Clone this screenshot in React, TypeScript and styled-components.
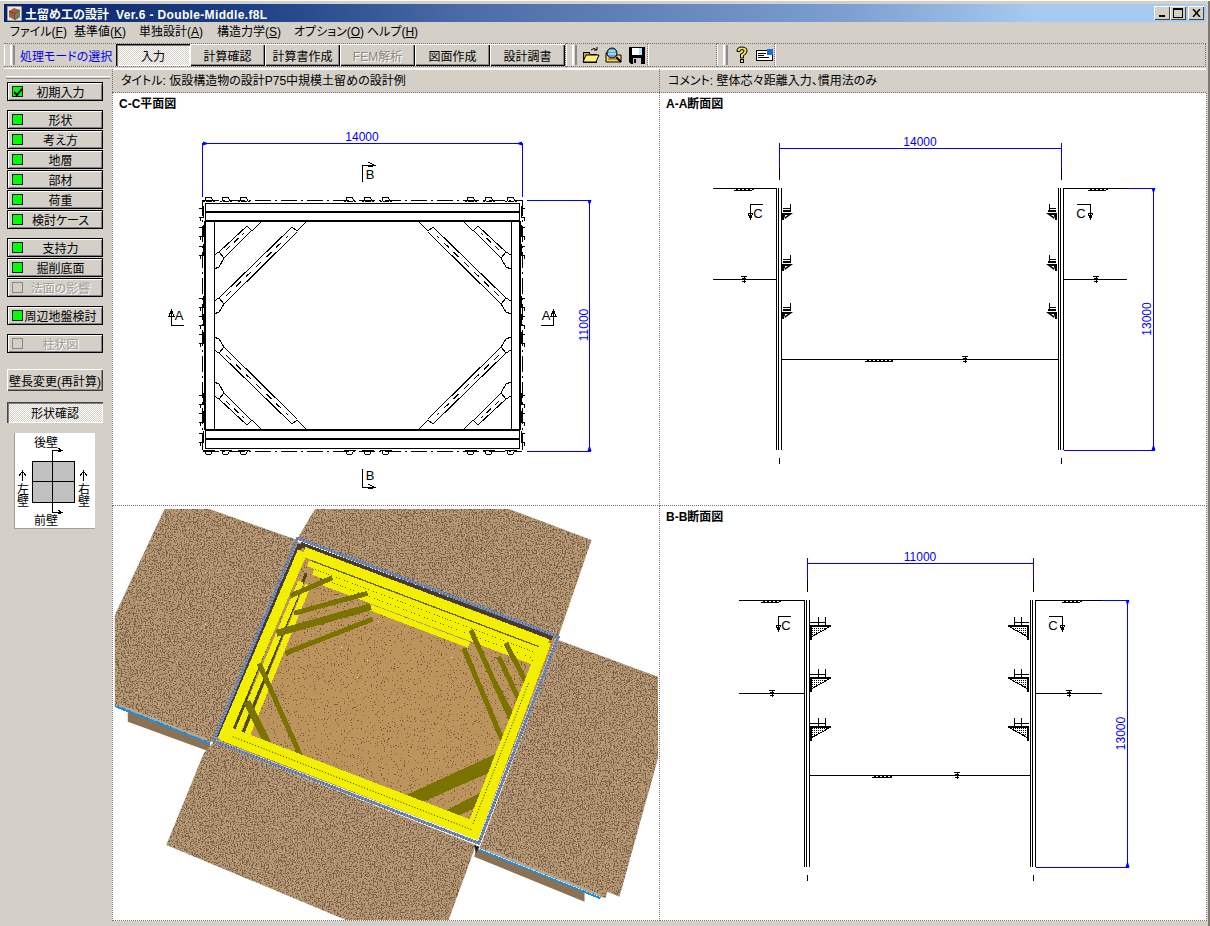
import { ReactElement } from 'react';
import styled, { createGlobalStyle, css } from 'styled-components';

const FACE = '#d4d0c8';
const UI_FONT = '"Liberation Sans", "Noto Sans CJK JP", sans-serif';
const CHECKER = `repeating-conic-gradient(#fff 0 25%, ${FACE} 0 50%) 0 0 / 2px 2px`;

const GlobalStyle = createGlobalStyle`
    html, body {
        margin: 0;
        padding: 0;
        background: ${FACE};
    }
    * {
        box-sizing: border-box;
    }
`;

const Window = styled.div`
    width: 1210px;
    height: 926px;
    padding: 4px 4px 5px;
    background: ${FACE};
    box-shadow: inset 0 1px 0 #fff, inset -2px 0 0 #7c7870;
    font-family: ${UI_FONT};
    font-size: 12px;
    font-feature-settings: 'palt';
    color: #000;
    display: flex;
    flex-direction: column;
    overflow: hidden;
`;

const TitleBar = styled.div`
    height: 18px;
    flex: none;
    display: flex;
    align-items: center;
    padding: 0 3px;
    gap: 3px;
    background: linear-gradient(90deg, #0a246a 0%, #1d3f85 20%, #4a6ba6 38%, #7c9fd0 70%, #a6caf0 86%);
`;

const TitleText = styled.div`
    flex: 1;
    color: #fff;
    font-weight: 700;
    font-size: 12px;
    font-feature-settings: normal;
    white-space: pre;

    span {
        margin-left: 7px;
        letter-spacing: 0.35px;
    }
`;

const WinButton = styled.div<{ $gap?: boolean }>`
    width: 16px;
    height: 14px;
    margin-left: ${p => (p.$gap ? 2 : 0)}px;
    background: ${FACE};
    box-shadow: inset 1px 1px 0 #fff, inset -1px -1px 0 #404040;
    display: flex;
    align-items: center;
    justify-content: center;
`;

const WinButtons = styled.div`
    display: flex;
    margin-right: -1px;
`;

const MenuBar = styled.div`
    height: 20px;
    flex: none;
    display: flex;
    align-items: center;
    padding-left: 6px;
`;

const MenuItem = styled.div<{ $w: number }>`
    width: ${p => p.$w}px;
    font-size: 12px;
    line-height: 16px;
    white-space: nowrap;

    u {
        text-decoration: underline;
    }
`;

const ToolRow = styled.div`
    height: 27px;
    flex: none;
    display: flex;
    align-items: stretch;
    padding: 1px 0;
    border-bottom: 1px solid #fff;
`;

const Band = styled.div<{ $w: number }>`
    width: ${p => p.$w}px;
    flex: none;
    display: flex;
    align-items: center;
    border-top: 1px dotted #77736c;
    border-bottom: 1px dotted #77736c;
    border-right: 1px dotted #77736c;
    box-shadow: inset 1px 0 0 #fff;
`;

const Grip = styled.div<{ $r?: number }>`
    width: 5px;
    height: 20px;
    margin: 0 ${p => p.$r ?? 5}px 0 6px;
    border-left: 2px solid #fff;
    border-right: 2px solid #8b8a92;
    flex: none;
`;

const ModeLabel = styled.div`
    width: 96px;
    color: #0000ee;
    font-size: 12px;
    white-space: nowrap;
`;

const ModeButton = styled.div<{ $on?: boolean; $off?: boolean; $w?: number }>`
    width: ${p => p.$w ?? 74}px;
    height: 22px;
    flex: none;
    display: flex;
    align-items: center;
    justify-content: center;
    font-size: 12px;
    background: ${FACE};
    box-shadow: inset 1px 1px 0 #fff, inset -1px -1px 0 #000, inset -2px -2px 0 #8a8a8a;
    ${p =>
        p.$on &&
        css`
            background: ${CHECKER};
            box-shadow: inset 1px 1px 0 #000, inset 2px 2px 0 #808080, inset -1px -1px 0 #fff;
        `}
    ${p =>
        p.$off &&
        css`
            color: #8a8780;
            text-shadow: 1px 1px 0 #fff;
        `}
`;

const IconSlot = styled.div`
    width: 23px;
    height: 20px;
    display: flex;
    align-items: center;
    justify-content: center;
    flex: none;
`;

const Body = styled.div`
    flex: 1;
    display: flex;
    min-height: 0;
`;

const SidePanel = styled.div`
    width: 108px;
    flex: none;
    padding: 7px 0 0 3px;
`;

const SideGrip = styled.div`
    height: 3px;
    margin: 0 2px 3px -1px;
    border-top: 1px solid #fff;
    border-bottom: 1px solid #8b8a92;
`;

const SideGroup = styled.div<{ $top: number }>`
    margin-top: ${p => p.$top}px;
    display: flex;
    flex-direction: column;
    gap: 1px;
`;

const SideButton = styled.div<{ $off?: boolean }>`
    width: 96px;
    height: 19px;
    display: flex;
    align-items: center;
    padding: 0 4px;
    background: ${FACE};
    border: 1px solid #000;
    box-shadow: inset 1px 1px 0 #fff, inset -1px -1px 0 #7d7d88;
    font-size: 12px;
    ${p =>
        p.$off &&
        css`
            color: #a09c94;
            text-shadow: 1px 1px 0 #fff;
        `}
`;

const SideLabel = styled.span`
    flex: 1;
    text-align: center;
    white-space: nowrap;
`;

const Led = styled.span<{ $off?: boolean }>`
    width: 11px;
    height: 11px;
    flex: none;
    background: ${p => (p.$off ? FACE : '#00ff00')};
    border: 1px solid ${p => (p.$off ? '#8a8780' : '#1b1b1b')};
    display: flex;
    align-items: center;
    justify-content: center;
`;

const PlainButton = styled.div`
    width: 96px;
    height: 22px;
    display: flex;
    align-items: center;
    justify-content: center;
    background: ${FACE};
    box-shadow: inset 1px 1px 0 #fff, inset -1px -1px 0 #3c3c3c, inset -2px -2px 0 #8a8a8a;
    font-size: 12px;
    white-space: nowrap;
`;

const LatchButton = styled.div`
    width: 96px;
    height: 21px;
    display: flex;
    align-items: center;
    justify-content: center;
    background: ${CHECKER};
    box-shadow: inset 1px 1px 0 #444, inset 2px 2px 0 #808080, inset -1px -1px 0 #fff;
    font-size: 12px;
`;

const KeyBox = styled.div`
    margin: 10px 0 0 7px;
    width: 81px;
    height: 96px;
    background: #fff;
    box-shadow: inset 1px 0 0 #a59f94, inset 0 -1px 0 #a59f94;
`;

const Main = styled.div`
    flex: 1;
    min-width: 0;
    display: flex;
    flex-direction: column;
`;

const StripRow = styled.div`
    height: 24px;
    flex: none;
    display: grid;
    grid-template-columns: 547px 547px;
    border-bottom: 1px dotted #77736c;
`;

const Strip = styled.div`
    padding: 4px 0 0 8px;
    font-size: 12px;
    line-height: 16px;
    white-space: nowrap;
    border-left: 1px dotted #77736c;
    box-shadow: inset 0 1px 0 #fff;
`;

const PaneGrid = styled.div`
    flex: 1;
    display: grid;
    grid-template-columns: 547px 547px;
    grid-template-rows: 413px 415px;
    background: #fff;
`;

const Pane = styled.div`
    position: relative;
    overflow: hidden;
    background: #fff;
    border-left: 1px dotted #77736c;
    border-right: 1px dotted #77736c;
    border-bottom: 1px dotted #77736c;
    margin-right: -1px;
`;

const PaneTitle = styled.div`
    position: relative;
    z-index: 1;
    padding: 4px 0 0 6px;
    font-size: 12px;
    line-height: 15px;
    font-weight: 700;
`;

const Drawing = styled.svg`
    position: absolute;
    left: -1px;
    top: 0;
`;

/* ---------- CAD helpers, all in screen coordinates ---------- */

const cadText = { fontFamily: '"Liberation Sans", sans-serif' };

function Line({ d, w = 1, c = '#000', dash }: { d: string; w?: number; c?: string; dash?: string }): ReactElement {
    return <path d={d} stroke={c} strokeWidth={w} strokeDasharray={dash} fill='none' shapeRendering='crispEdges' />;
}

function DimText({ x, y, children, rotate }: { x: number; y: number; children: string; rotate?: boolean }): ReactElement {
    return (
        <text
            x={x}
            y={y}
            fill='#0000ff'
            fontSize='12'
            textAnchor='middle'
            transform={rotate ? `rotate(-90 ${x} ${y})` : undefined}
            style={cadText}
        >
            {children}
        </text>
    );
}

function Pile({ x, y, side }: { x: number; y: number; side: 'h' | 'v' }): ReactElement {
    return side === 'h' ? (
        <Line d={`M${x} ${y + 4}H${x + 2}L${x + 3} ${y}H${x + 8}L${x + 10} ${y + 4}H${x + 12}M${x + 3} ${y + 4}H${x + 9}`} />
    ) : (
        <Line d={`M${x + 5} ${y}H${x + 1}V${y + 9}H${x + 5}M${x + 1} ${y}V${y - 2}M${x + 4} ${y + 9}V${y + 13}`} />
    );
}

const SIDE_PILES = [208, 227, 246, 298, 316, 334, 395, 413, 433];
const TOP_PILES = [203, 220, 238, 344, 362, 380, 465, 483, 505];

function CornerStruts(): ReactElement {
    return (
        <g>
            <Line d='M219 252L247 226M224 258L252 230' />
            <Line d='M226 250L244 233' dash='6 5' />
            <Line d='M214 255L219 252L224 258L219 267L214 269M247 221H262L252 231L247 226' />
            <Line d='M226 296L288 236' dash='7 7' />
            <Line d='M219 298L292 227M224 304L297 232' />
            <Line d='M214 301L219 298L224 304L219 312L214 314M292 221H307L297 231L292 227' />
        </g>
    );
}

function PlanMark({ d, x, y, label }: { d: string; x: number; y: number; label: string }): ReactElement {
    return (
        <g>
            <Line d={d} />
            <text x={x} y={y} fontSize='13' textAnchor='middle' style={cadText}>
                {label}
            </text>
        </g>
    );
}

function PlanDrawing(): ReactElement {
    return (
        <Drawing width={547} height={413} viewBox='112 93 547 413'>
            <Line c='#0000ff' d='M202.5 143.5H522.5M202.5 143V197M522.5 143V197' />
            <path d='M203 141.500L209 143.500L203 145.500Z' fill='#0000ff' />
            <path d='M522 141.500L516 143.500L522 145.500Z' fill='#0000ff' />
            <DimText x={362} y={141}>14000</DimText>
            <Line c='#0000ff' d='M527 200.500H590.500M527 451.500H590.500M589.500 200V451' />
            <path d='M587.500 200L589.500 206L591.500 200Z M587.500 451L589.500 445L591.500 451Z' fill='#0000ff' />
            <DimText x={588} y={325} rotate>11000</DimText>

            <Line dash='16 4 2 4' d='M203 200.500H522M203 451.500H522M202.500 200V451M522.500 200V451' />
            <Line d='M205 203.500H520M205 448.500H520M205.500 203V448M519.500 203V448M214.500 221V430M511.500 221V430' />
            <Line w={2} d='M205 212H520M205 221H520M205 430H520M205 439H520M520 221V430M205 221V430' />

            {TOP_PILES.map(x => (
                <g key={x}>
                    <Pile x={x} y={197} side='h' />
                    <g transform='translate(0 651) scale(1 -1)'>
                        <Pile x={x} y={197} side='h' />
                    </g>
                </g>
            ))}
            {SIDE_PILES.map(y => (
                <g key={y}>
                    <g transform='translate(205 0) scale(-1 1) translate(1 0)'>
                        <Pile x={0} y={y} side='v' />
                    </g>
                    <Pile x={520} y={y} side='v' />
                </g>
            ))}

            <CornerStruts />
            <g transform='translate(725 0) scale(-1 1)'>
                <CornerStruts />
            </g>
            <g transform='translate(0 651) scale(1 -1)'>
                <CornerStruts />
            </g>
            <g transform='translate(725 651) scale(-1 -1)'>
                <CornerStruts />
            </g>

            <PlanMark d='M362.500 182V165.500H375M368 162L375 165.500L368 167' x={370} y={179} label='B' />
            <PlanMark d='M362.500 469V487.500H375M368 484L375 487.500L368 489' x={370} y={480} label='B' />
            <PlanMark d='M171.500 310V325.500H184M169 316L171.500 310L174 316Z' x={179} y={320} label='A' />
            <PlanMark d='M553.500 310V325.500H541M551 316L553.500 310L556 316Z' x={546} y={320} label='A' />
        </Drawing>
    );
}

function GroundHatch({ x, y, w }: { x: number; y: number; w: number }): ReactElement {
    const marks = Array.from({ length: Math.floor(w / 4) }, (_, i) => `M${x + i * 4} ${y + 3}L${x + i * 4 + 4} ${y + 1}`);
    return <Line d={`${marks.join('')}M${x + 2} ${y + 2}H${x + w - 2}`} />;
}

function WaterMark({ x, y }: { x: number; y: number }): ReactElement {
    return <Line d={`M${x - 3} ${y - 3}H${x + 3}M${x - 2} ${y - 1}H${x + 2}M${x} ${y - 3}V${y + 4}M${x - 2} ${y + 2}H${x + 2}`} w={1} />;
}

function SmallBracket({ x, y }: { x: number; y: number }): ReactElement {
    return (
        <g>
            <Line d={`M${x + 8} ${y}V${y + 8}M${x + 1} ${y + 4}H${x + 8}`} />
            <Line w={2} d={`M${x + 1} ${y + 7}H${x + 9}M${x + 1} ${y + 9}V${y + 16}`} />
            <path d={`M${x + 1} ${y + 9}H${x + 11}L${x + 3} ${y + 15}Z`} fill='#000' />
            <path d={`M${x + 3} ${y + 11}H${x + 6}L${x + 3} ${y + 13}Z`} fill='#fff' />
        </g>
    );
}

function LargeBracket({ x, y }: { x: number; y: number }): ReactElement {
    return (
        <g>
            <Line w={1} d={`M${x + 8} ${y}V${y + 9}M${x + 15} ${y}V${y + 9}M${x} ${y + 5}H${x + 15}`} />
            <Line w={1} d={`M${x} ${y + 8}H${x + 21}`} />
            <path d={`M${x} ${y + 9}H${x + 21}L${x + 1} ${y + 20}Z`} fill='url(#bracketHatch)' stroke='#000' shapeRendering='crispEdges' />
            <Line w={2} d={`M${x + 1} ${y + 9}V${y + 23}`} />
        </g>
    );
}

type SectionProps = {
    x1: number;
    x2: number;
    top: number;
    end: number;
    water: number;
    floor: number;
    dimY: number;
    groundLeft: number;
    groundRight: number;
    hatchLeft: number;
    hatchRight: number;
    hatchFloor: number;
    hatchFloorWidth: number;
    waterLeft: number;
    waterRight: number;
    waterFloor: number;
    dimX: number;
    brackets: number[];
    large?: boolean;
    vb: string;
    dimLabel: string;
    sideLabel: string;
};

function Section(s: SectionProps): ReactElement {
    const Bracket = s.large ? LargeBracket : SmallBracket;
    const mid = (s.top + s.end) / 2;
    const markY = s.top + 16;
    const mx1 = s.x1 - 29;
    const mx2 = s.x2 + 29;
    return (
        <Drawing width={547} height={415} viewBox={s.vb}>
            <defs>
                <pattern id='bracketHatch' width='2' height='2' patternUnits='userSpaceOnUse'>
                    <rect width='2' height='2' fill='#fff' />
                    <rect width='1' height='1' fill='#000' />
                </pattern>
            </defs>
            <Line c='#0000ff' d={`M${s.x1 + 0.5} ${s.dimY + 0.5}H${s.x2 + 0.5}`} />
            <Line c='#0000ff' d={`M${s.x1 + 0.5} ${s.dimY - 5}V${s.dimY + 24}M${s.x2 + 0.5} ${s.dimY - 5}V${s.dimY + 24}`} />
            <DimText x={(s.x1 + s.x2) / 2} y={s.dimY - 2}>{s.dimLabel}</DimText>

            <Line d={`M${s.x1 - 2.5} ${s.top}V${s.end}M${s.x1 + 2.5} ${s.top}V${s.end}M${s.x2 - 2.5} ${s.top}V${s.end}M${s.x2 + 2.5} ${s.top}V${s.end}`} />
            <Line d={`M${s.x1 - 0.5} ${s.top}V${s.end}M${s.x2 - 0.5} ${s.top}V${s.end}`} />
            <Line d={`M${s.x1 + 0.5} ${s.top - 20}V${s.top - 8}M${s.x1 + 0.5} ${s.end + 8}V${s.end + 14}M${s.x2 + 0.5} ${s.top - 20}V${s.top - 8}M${s.x2 + 0.5} ${s.end + 8}V${s.end + 14}`} />

            <Line d={`M${s.groundLeft} ${s.top + 0.5}H${s.x1 - 2}M${s.x2 + 3} ${s.top + 0.5}H${s.groundRight}`} />
            <GroundHatch x={s.hatchLeft} y={s.top} w={20} />
            <GroundHatch x={s.hatchRight} y={s.top} w={20} />
            <Line d={`M${s.groundLeft} ${s.water + 0.5}H${s.x1 - 2}M${s.x2 + 3} ${s.water + 0.5}H${s.groundRight}`} />
            <WaterMark x={s.waterLeft} y={s.water} />
            <WaterMark x={s.waterRight} y={s.water} />
            <Line d={`M${s.x1 + 3} ${s.floor + 0.5}H${s.x2 - 2}`} />
            <GroundHatch x={s.hatchFloor} y={s.floor} w={s.hatchFloorWidth} />
            <WaterMark x={s.waterFloor} y={s.floor} />

            {s.brackets.map(y => (
                <g key={y}>
                    <Bracket x={s.x1 + 3} y={y} />
                    <g transform={`translate(${2 * s.x2 - 2} 0) scale(-1 1)`}>
                        <Bracket x={s.x2 + 2} y={y} />
                    </g>
                </g>
            ))}

            <Line c='#0000ff' d={`M${s.groundRight} ${s.top + 0.5}H${s.dimX + 2}M${s.x2 + 3} ${s.end + 0.5}H${s.dimX + 2}M${s.dimX + 0.5} ${s.top}V${s.end}`} />
            <path d={`M${s.dimX - 1.500} ${s.top}L${s.dimX + 0.500} ${s.top + 6}L${s.dimX + 2.500} ${s.top}ZM${s.dimX - 1.500} ${s.end}L${s.dimX + 0.500} ${s.end - 6}L${s.dimX + 2.500} ${s.end}Z`} fill='#0000ff' />
            <DimText x={s.dimX - 2} y={mid} rotate>{s.sideLabel}</DimText>

            <PlanMark d={`M${mx1 + 0.5} ${markY + 15}V${markY + 0.5}H${mx1 + 13}M${mx1 - 2} ${markY + 9}H${mx1 + 3}L${mx1 + 0.5} ${markY + 15}Z`} x={mx1 + 8} y={markY + 14} label='C' />
            <PlanMark d={`M${mx2 + 0.5} ${markY + 15}V${markY + 0.5}H${mx2 - 13}M${mx2 - 2} ${markY + 9}H${mx2 + 3}L${mx2 + 0.5} ${markY + 15}Z`} x={mx2 - 9} y={markY + 14} label='C' />
        </Drawing>
    );
}

/* ---------- the 3D view. Coordinates come from a crop of the view, z() maps them to the page ---------- */

const z = (x: number, y: number): string => `${(112 + x / 2.857).toFixed(1)},${(505 + y / 3).toFixed(1)}`;
const poly = (pts: number[][]): string => pts.map(p => z(p[0], p[1])).join(' ');

type Stripe = [number, number, number, number, number];

const SOIL = [
    [[150, 12], [278, 12], [530, 105], [290, 705], [278, 715], [8, 605], [8, 330]],
    [[580, 12], [1135, 12], [1370, 105], [1275, 395], [530, 100]],
    [[1275, 405], [1560, 515], [1560, 760], [1450, 1175], [1415, 1160], [1410, 1180], [1395, 1175], [1050, 1030]],
    [[290, 712], [1040, 1020], [960, 1250], [680, 1250], [155, 1020], [262, 745]],
];

const TOP_STRIPES: Stripe[] = [
    [548, 140, 1245, 417, 10],
    [560, 175, 1228, 440, 6],
    [575, 201, 1212, 454, 6],
    [600, 231, 1200, 469, 6],
    [735, 306, 1020, 420, 6],
];

const LEFT_SHADOWS: Stripe[] = [
    [530, 175, 340, 700, 3],
    [555, 205, 370, 695, 3],
];

const LEFT_STRIPES: Stripe[] = [
    [544, 140, 315, 705, 10],
    [540, 230, 355, 690, 6],
    [560, 240, 384, 695, 6],
];

const STRUTS: Stripe[] = [
    [630, 218, 510, 272, 5],
    [730, 265, 520, 325, 5],
    [740, 305, 470, 385, 7],
    [745, 342, 495, 445, 5],
    [420, 475, 540, 755, 5],
    [385, 590, 445, 715, 7],
    [1025, 375, 1145, 655, 5],
    [1005, 430, 1115, 705, 5],
    [1105, 455, 1165, 590, 5],
    [1125, 415, 1190, 545, 5],
    [1075, 490, 1150, 640, 3],
];

function Band3D({ b, c = '#f2f000' }: { b: Stripe; c?: string }): ReactElement {
    return <polyline points={poly([[b[0], b[1]], [b[2], b[3]]])} stroke={c} strokeWidth={b[4]} fill='none' shapeRendering='crispEdges' />;
}

function PitView(): ReactElement {
    return (
        <Drawing width={547} height={415} viewBox='112 506 547 415'>
            <defs>
                <filter id='soilNoise' x='0' y='0' width='100%' height='100%' colorInterpolationFilters='sRGB'>
                    <feTurbulence type='fractalNoise' baseFrequency='0.75' numOctaves='3' seed='4' />
                    <feColorMatrix values='1 0 0 0 0  1 0 0 0 0  1 0 0 0 0  0 0 0 0 1' />
                    <feComponentTransfer>
                        <feFuncR type='discrete' tableValues='0.47 0.47 0.47 0.47 0.47 0.47 0.47 0.69 0.7 0.72 0.74 0.77 0.8 0.85 0.9 0.9' />
                        <feFuncG type='discrete' tableValues='0.38 0.38 0.38 0.38 0.38 0.38 0.38 0.57 0.58 0.6 0.62 0.65 0.7 0.76 0.85 0.85' />
                        <feFuncB type='discrete' tableValues='0.28 0.28 0.28 0.28 0.28 0.28 0.28 0.43 0.44 0.46 0.48 0.5 0.55 0.62 0.75 0.75' />
                    </feComponentTransfer>
                </filter>
                <filter id='floorNoise' x='0' y='0' width='100%' height='100%' colorInterpolationFilters='sRGB'>
                    <feTurbulence type='fractalNoise' baseFrequency='0.7' numOctaves='2' seed='9' />
                    <feColorMatrix values='1 0 0 0 0  1 0 0 0 0  1 0 0 0 0  0 0 0 0 1' />
                    <feComponentTransfer>
                        <feFuncR type='discrete' tableValues='0.45 0.45 0.45 0.45 0.45 0.74 0.74 0.74 0.74 0.74 0.74 0.74 0.76 0.8 0.95 0.95' />
                        <feFuncG type='discrete' tableValues='0.36 0.36 0.36 0.36 0.36 0.58 0.58 0.58 0.58 0.58 0.58 0.58 0.6 0.64 0.92 0.92' />
                        <feFuncB type='discrete' tableValues='0.27 0.27 0.27 0.27 0.27 0.36 0.36 0.36 0.36 0.36 0.36 0.36 0.38 0.42 0.85 0.85' />
                    </feComponentTransfer>
                </filter>
                <clipPath id='soilClip'>
                    {SOIL.map((s, i) => (
                        <polygon key={i} points={poly(s)} />
                    ))}
                </clipPath>
                <clipPath id='floorClip'>
                    <polygon points={poly([[530, 110], [1270, 395], [1045, 1005], [295, 705]])} />
                </clipPath>
            </defs>

            <polygon points={poly([[45, 620], [280, 716], [280, 740], [45, 650]])} fill='#8c7152' />
            <polygon points={poly([[1040, 1030], [1350, 1160], [1350, 1190], [1035, 1055]])} fill='#8c7152' />

            <rect x='112' y='506' width='547' height='415' filter='url(#soilNoise)' clipPath='url(#soilClip)' />
            <rect x='112' y='506' width='547' height='415' filter='url(#floorNoise)' clipPath='url(#floorClip)' />

            <polyline points={poly([[8, 603], [280, 716]])} stroke='#1e8fe0' strokeWidth='2' fill='none' shapeRendering='crispEdges' />
            <polyline points={poly([[1050, 1035], [1395, 1180]])} stroke='#1e8fe0' strokeWidth='2' fill='none' shapeRendering='crispEdges' />
            <polyline points={poly([[20, 600], [270, 704]])} stroke='#b0a898' strokeWidth='2' fill='none' shapeRendering='crispEdges' />
            <polyline points={poly([[1070, 1033], [1395, 1170]])} stroke='#b0a898' strokeWidth='2' fill='none' shapeRendering='crispEdges' />

            <polyline points={poly([[538, 118], [1258, 400]])} stroke='#4a3a2e' strokeWidth='5' fill='none' shapeRendering='crispEdges' />
            <polyline points={poly([[538, 118], [298, 695]])} stroke='#4a3a2e' strokeWidth='5' fill='none' shapeRendering='crispEdges' />

            <polygon points={poly([[560, 150], [1235, 420], [1200, 475], [600, 235]])} fill='#6a6410' shapeRendering='crispEdges' />
            {LEFT_SHADOWS.map((b, i) => (
                <Band3D key={i} b={b} c='#4d4a14' />
            ))}
            {TOP_STRIPES.map((b, i) => (
                <Band3D key={i} b={b} />
            ))}
            {LEFT_STRIPES.map((b, i) => (
                <Band3D key={i} b={b} />
            ))}
            {STRUTS.map((b, i) => (
                <Band3D key={i} b={b} c='#7b7300' />
            ))}

            <polygon points={poly([[830, 875], [1110, 740], [1095, 795], [885, 892]])} fill='#7b7300' shapeRendering='crispEdges' />
            <polygon points={poly([[940, 925], [1075, 850], [1040, 905], [985, 935]])} fill='#7b7300' shapeRendering='crispEdges' />

            <polygon points={poly([[1255, 412], [1045, 1005], [1004, 990], [1217, 425]])} fill='#f2f000' shapeRendering='crispEdges' />
            <polygon points={poly([[335, 665], [1040, 950], [1045, 1005], [308, 705]])} fill='#f2f000' shapeRendering='crispEdges' />
            <polyline points={poly([[1190, 535], [1030, 960]])} stroke='#222' strokeWidth='1' strokeDasharray='1 2' fill='none' />
            <polyline points={poly([[345, 695], [1030, 975]])} stroke='#222' strokeWidth='1' strokeDasharray='1 2' fill='none' />

            <polygon
                points={poly([[530, 100], [1275, 395], [1048, 1015], [290, 708]])}
                stroke='#7b90b4'
                strokeWidth='3'
                fill='none'
                shapeRendering='crispEdges'
            />
            <polygon
                points={poly([[530, 100], [1275, 395], [1048, 1015], [290, 708]])}
                stroke='#4f6a9c'
                strokeWidth='3'
                strokeDasharray='1 2'
                fill='none'
                shapeRendering='crispEdges'
            />
            <polygon points={poly([[1035, 1020], [1050, 1025], [1040, 1045]])} fill='#222' />
        </Drawing>
    );
}

/* ---------- small icons ---------- */

function AppIcon(): ReactElement {
    return (
        <svg width='15' height='15' viewBox='0 0 15 15'>
            <rect width='15' height='15' fill='#e8e8e8' stroke='#555' />
            <path d='M2 5L7 2L13 4V11L8 14L2 11Z' fill='#a3603f' />
            <path d='M2 5L8 8L13 4M8 8V14' stroke='#5f3a28' fill='none' />
            <path d='M8 8L13 4V11L8 14Z' fill='#6f7f5c' />
        </svg>
    );
}

function OpenIcon(): ReactElement {
    return (
        <svg width='18' height='18' viewBox='0 0 18 18'>
            <path d='M1 6H7L8 8H14V16H1Z' fill='#c8b040' stroke='#000' shapeRendering='crispEdges' />
            <path d='M1 16L4 9H17L14 16Z' fill='#ffef70' stroke='#000' />
            <path d='M9 4Q12 1 15 4M15 1V4H12' stroke='#000' fill='none' />
        </svg>
    );
}

function SearchIcon(): ReactElement {
    return (
        <svg width='18' height='18' viewBox='0 0 18 18'>
            <path d='M1 7H7L8 9H16V16H1Z' fill='#f0dc50' stroke='#000' />
            <circle cx='7' cy='7' r='5' fill='#58a6d8' stroke='#000' />
            <path d='M4 5H10M3 8H11' stroke='#fff' />
            <path d='M11 11L16 16' stroke='#000' strokeWidth='2' />
            <path d='M3 13H12' stroke='#d03020' />
        </svg>
    );
}

function SaveIcon(): ReactElement {
    return (
        <svg width='16' height='17' viewBox='0 0 16 17'>
            <path d='M0 0H16V17H2L0 15Z' fill='#000' />
            <rect x='3' y='1' width='10' height='7' fill='#fff' />
            <rect x='10' y='1' width='3' height='7' fill='#a6e6ff' />
            <rect x='4' y='11' width='8' height='6' fill='#c8c8c8' />
            <rect x='5' y='12' width='2' height='4' fill='#000' />
        </svg>
    );
}

function HelpIcon(): ReactElement {
    return (
        <svg width='14' height='18' viewBox='0 0 14 18'>
            <path
                d='M2 5Q2 1 7 1Q12 1 12 5Q12 8 8.500 9.500V12H5.500V8Q9 7 9 5Q9 3.500 7 3.500Q5 3.500 5 5.500H2Z'
                fill='#f2e43a'
                stroke='#000'
            />
            <rect x='5.500' y='13.500' width='3' height='3' fill='#f2e43a' stroke='#000' />
        </svg>
    );
}

function CardIcon(): ReactElement {
    return (
        <svg width='17' height='12' viewBox='0 0 17 12'>
            <rect x='0.500' y='1.500' width='16' height='10' fill='#fff' stroke='#000' />
            <rect x='11' y='0' width='6' height='6' fill='#1a6fd0' />
            <path d='M2 4.500H10M2 6.500H8M2 8.500H13' stroke='#000' shapeRendering='crispEdges' />
        </svg>
    );
}

function KeyDiagram(): ReactElement {
    const label = { fontFamily: '"Noto Sans CJK JP", sans-serif', fontSize: 12 };
    const upright = { ...label, writingMode: 'vertical-rl' as const, textOrientation: 'upright' as const };
    return (
        <svg width='81' height='96' viewBox='14 433 81 96'>
            <rect x='32.500' y='461.500' width='42' height='41' fill='#c0c0c0' stroke='#000' />
            <Line d='M52.500 450V513M32 481.500H75M52.500 450.500H62M58 448L62 450.500L58 452M52.500 512.500H62M58 510L62 512.500L58 514' />
            <Line d='M22.500 481V472M19 476L22.500 471L26 476M83.500 481V472M80 476L83.500 471L87 476' />
            <text x='46' y='447' textAnchor='middle' style={label}>後壁</text>
            <text x='46' y='525' textAnchor='middle' style={label}>前壁</text>
            <text x='23' y='483' style={upright}>左壁</text>
            <text x='84' y='483' style={upright}>右壁</text>
        </svg>
    );
}

/* ---------- data ---------- */

const MENUS: [string, string, number][] = [
    ['ファイル', 'F', 64],
    ['基準値', 'K', 65],
    ['単独設計', 'A', 78],
    ['構造力学', 'S', 77],
    ['オプション', 'O', 73],
    ['ヘルプ', 'H', 60],
];

const MODES = ['計算確認', '計算書作成'];
const MODES_AFTER = ['図面作成', '設計調書'];
const SHAPE_BUTTONS = ['形状', '考え方', '地層', '部材', '荷重', '検討ケース'];

function SideEntry({ label, off, checked }: { label: string; off?: boolean; checked?: boolean }): ReactElement {
    return (
        <SideButton $off={off}>
            <Led $off={off}>
                {checked && (
                    <svg width='8' height='8' viewBox='0 0 8 8'>
                        <path d='M0 4L3 7L8 1' stroke='#000' strokeWidth='2' fill='none' />
                    </svg>
                )}
            </Led>
            <SideLabel>{label}</SideLabel>
        </SideButton>
    );
}

export default function App(): ReactElement {
    return (
        <>
            <GlobalStyle />
            <Window>
                <TitleBar>
                    <AppIcon />
                    <TitleText>
                        土留め工の設計<span>Ver.6 - Double-Middle.f8L</span>
                    </TitleText>
                    <WinButtons>
                        <WinButton>
                            <svg width='8' height='8'><rect x='1' y='6' width='6' height='2' /></svg>
                        </WinButton>
                        <WinButton>
                            <svg width='10' height='10'><rect x='0.500' y='0.500' width='9' height='9' fill='none' stroke='#000' /><rect width='10' height='2' /></svg>
                        </WinButton>
                        <WinButton $gap>
                            <svg width='9' height='8'><path d='M1 0L8 8M8 0L1 8' stroke='#000' strokeWidth='1.500' /></svg>
                        </WinButton>
                    </WinButtons>
                </TitleBar>

                <MenuBar>
                    {MENUS.map(([name, key, w]) => (
                        <MenuItem key={key} $w={w}>
                            {name}(<u>{key}</u>)
                        </MenuItem>
                    ))}
                </MenuBar>

                <ToolRow>
                    <Band $w={562}>
                        <Grip />
                        <ModeLabel>処理モードの選択</ModeLabel>
                        <ModeButton $on>入力</ModeButton>
                        {MODES.map(m => (
                            <ModeButton key={m} $w={75}>{m}</ModeButton>
                        ))}
                        <ModeButton $off $w={75}>FEM解析</ModeButton>
                        {MODES_AFTER.map(m => (
                            <ModeButton key={m} $w={75}>{m}</ModeButton>
                        ))}
                    </Band>
                    <Band $w={82}>
                        <Grip $r={2} />
                        <IconSlot><OpenIcon /></IconSlot>
                        <IconSlot><SearchIcon /></IconSlot>
                        <IconSlot><SaveIcon /></IconSlot>
                    </Band>
                    <Band $w={69} />
                    <Band $w={58}>
                        <Grip $r={2} />
                        <IconSlot><HelpIcon /></IconSlot>
                        <IconSlot><CardIcon /></IconSlot>
                    </Band>
                    <Band $w={431} />
                </ToolRow>

                <Body>
                    <SidePanel>
                        <SideGrip />
                        <SideEntry label='初期入力' checked />
                        <SideGroup $top={9}>
                            {SHAPE_BUTTONS.map(b => (
                                <SideEntry key={b} label={b} />
                            ))}
                        </SideGroup>
                        <SideGroup $top={9}>
                            <SideEntry label='支持力' />
                            <SideEntry label='掘削底面' />
                            <SideEntry label='法面の影響' off />
                        </SideGroup>
                        <SideGroup $top={9}>
                            <SideEntry label='周辺地盤検討' />
                        </SideGroup>
                        <SideGroup $top={9}>
                            <SideEntry label='柱状図' off />
                        </SideGroup>
                        <SideGroup $top={16}>
                            <PlainButton>壁長変更(再計算)</PlainButton>
                        </SideGroup>
                        <SideGroup $top={11}>
                            <LatchButton>形状確認</LatchButton>
                        </SideGroup>
                        <KeyBox>
                            <KeyDiagram />
                        </KeyBox>
                    </SidePanel>

                    <Main>
                        <StripRow>
                            <Strip>タイトル: 仮設構造物の設計P75中規模土留めの設計例</Strip>
                            <Strip>コメント: 壁体芯々距離入力、慣用法のみ</Strip>
                        </StripRow>
                        <PaneGrid>
                            <Pane>
                                <PaneTitle>C-C平面図</PaneTitle>
                                <PlanDrawing />
                            </Pane>
                            <Pane>
                                <PaneTitle>A-A断面図</PaneTitle>
                                <Section
                                    vb='659 93 547 415'
                                    x1={779}
                                    x2={1061}
                                    top={188}
                                    end={450}
                                    water={279}
                                    floor={359}
                                    dimY={148}
                                    groundLeft={713}
                                    groundRight={1127}
                                    hatchLeft={734}
                                    hatchRight={1088}
                                    hatchFloor={865}
                                    hatchFloorWidth={30}
                                    waterLeft={744}
                                    waterRight={1096}
                                    waterFloor={965}
                                    dimX={1153}
                                    brackets={[204, 255, 303]}
                                    dimLabel='14000'
                                    sideLabel='13000'
                                />
                            </Pane>
                            <Pane>
                                <PitView />
                            </Pane>
                            <Pane>
                                <PaneTitle>B-B断面図</PaneTitle>
                                <Section
                                    vb='659 506 547 415'
                                    x1={807}
                                    x2={1033}
                                    top={600}
                                    end={867}
                                    water={693}
                                    floor={775}
                                    dimY={563}
                                    groundLeft={739}
                                    groundRight={1102}
                                    hatchLeft={761}
                                    hatchRight={1062}
                                    hatchFloor={872}
                                    hatchFloorWidth={22}
                                    waterLeft={772}
                                    waterRight={1069}
                                    waterFloor={957}
                                    dimX={1127}
                                    brackets={[617, 669, 718]}
                                    large
                                    dimLabel='11000'
                                    sideLabel='13000'
                                />
                            </Pane>
                        </PaneGrid>
                    </Main>
                </Body>
            </Window>
        </>
    );
}
